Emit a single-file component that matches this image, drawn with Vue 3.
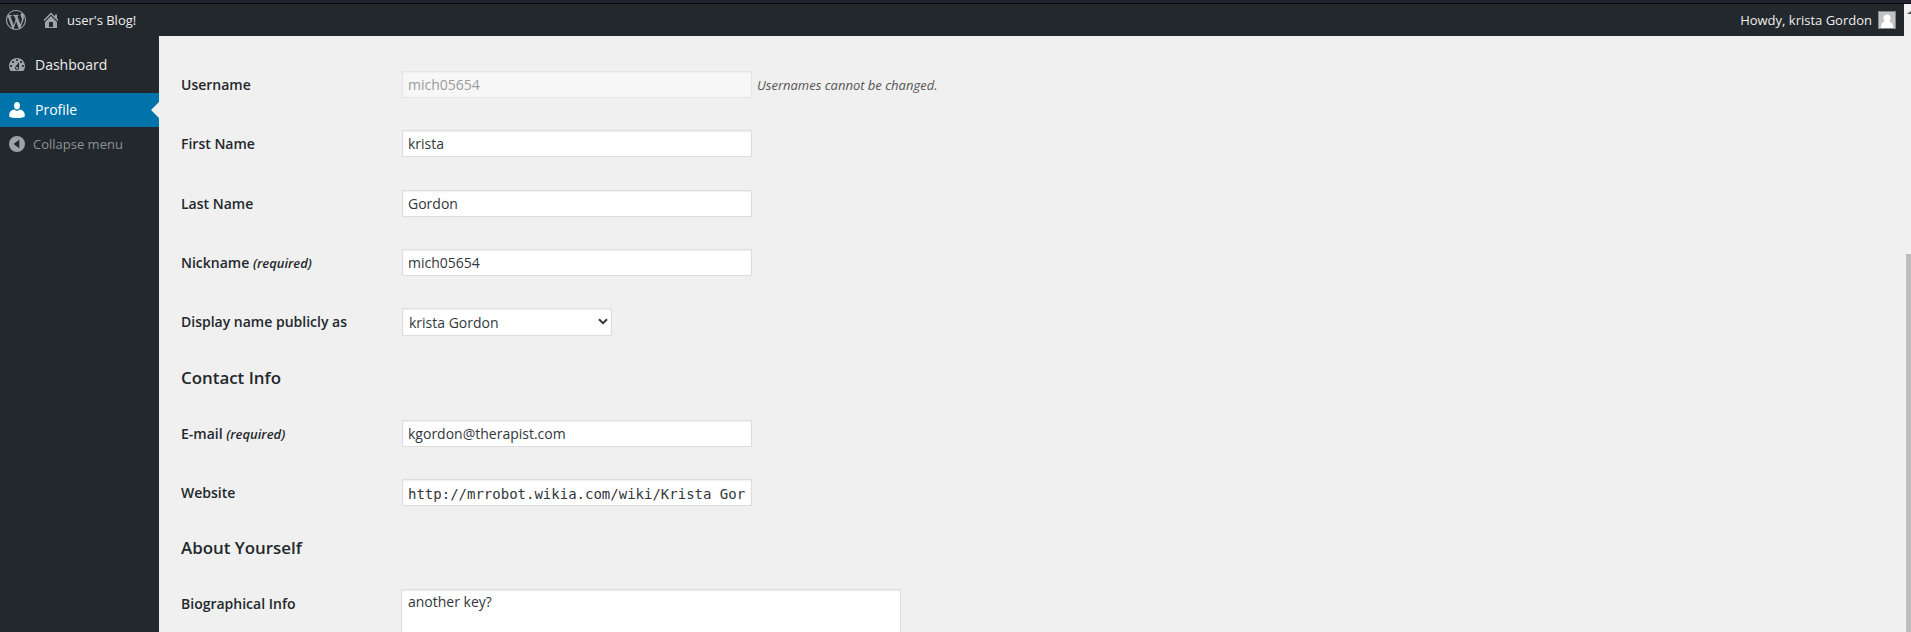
<script setup>
const nameRows = [
  { id: 'user', label: 'Username', value: 'mich05654', disabled: true, hint: 'Usernames cannot be changed.' },
  { id: 'first', label: 'First Name', value: 'krista' },
  { id: 'last', label: 'Last Name', value: 'Gordon' },
  { id: 'nick', label: 'Nickname', required: true, value: 'mich05654' },
]
const contactRows = [
  { id: 'email', label: 'E-mail', required: true, value: 'kgordon@therapist.com' },
  { id: 'url', label: 'Website', value: 'http://mrrobot.wikia.com/wiki/Krista Gordon', code: true },
]
</script>

<template>
  <div class="window">
    <div class="strip"></div>
    <div class="viewport">
      <div class="page">
        <header class="adminbar">
          <svg class="icon" viewBox="0 0 20 20"><path d="M20 10c0-5.51-4.49-10-10-10C4.48 0 0 4.49 0 10c0 5.52 4.48 10 10 10 5.51 0 10-4.48 10-10zM7.78 15.37L4.37 6.22c.55-.02 1.17-.08 1.17-.08.5-.06.44-1.13-.06-1.11 0 0-1.45.11-2.37.11-.18 0-.37 0-.58-.01C4.12 2.69 6.87 1.11 10 1.11c2.33 0 4.45.87 6.05 2.34-.68-.11-1.65.39-1.65 1.58 0 .74.45 1.36.9 2.1.35.61.55 1.36.55 2.46 0 1.49-1.4 5-1.4 5l-3.03-8.37c.54-.02.82-.17.82-.17.5-.05.44-1.25-.06-1.22 0 0-1.44.12-2.38.12-.87 0-2.33-.12-2.33-.12-.5-.03-.56 1.2-.06 1.22l.92.08 1.26 3.41zM17.41 10c.24-.64.74-1.87.43-4.25.7 1.29 1.05 2.71 1.05 4.25 0 3.29-1.73 6.24-4.4 7.78.97-2.59 1.94-5.2 2.92-7.78zM6.1 18.09C3.12 16.65 1.11 13.53 1.11 10c0-1.3.23-2.48.72-3.59C3.25 10.3 4.67 14.2 6.1 18.09zm4.03-6.63l2.58 6.98c-.86.29-1.76.45-2.71.45-.79 0-1.57-.11-2.29-.33.81-2.38 1.62-4.74 2.42-7.1z" /></svg>
          <svg class="icon home" viewBox="0 0 20 20"><path d="M16 8.5l1.53 1.53-1.06 1.06L10 4.6l-6.47 6.49-1.06-1.06L10 2.5l4 4v-2h2v4zm-6-2.46l6 5.99V18H4v-5.97zM12 17v-5H8v5h4z" /></svg>
          <span class="site">user's Blog!</span>
          <span class="howdy">Howdy, krista Gordon</span>
          <svg class="avatar" viewBox="0 0 18 18">
            <rect x=".5" y=".5" width="17" height="17" fill="#c3c3c3" stroke="#82878c" />
            <path d="M9 3.4c2.2 0 3.6 1.5 3.6 3.4 0 1.6-.7 2.8-1.6 3.5 2.6.7 4 2.7 4.2 6.700H2.8c.2-4 1.600-6 4.200-6.700-.9-.7-1.600-1.900-1.600-3.500C5.400 4.900 6.800 3.400 9 3.400z" fill="#fff" />
          </svg>
        </header>
        <div class="body">
          <nav class="menu">
            <a class="item">
              <svg class="icon" viewBox="0 0 20 20"><path d="M3.76 16h12.48c1.1-1.37 1.76-3.11 1.76-5 0-4.42-3.58-8-8-8s-8 3.58-8 8c0 1.89.66 3.63 1.76 5zM10 4c.55 0 1 .45 1 1s-.45 1-1 1-1-.45-1-1 .45-1 1-1zM6 6c.55 0 1 .45 1 1s-.45 1-1 1-1-.45-1-1 .45-1 1-1zm8 0c.55 0 1 .45 1 1s-.45 1-1 1-1-.45-1-1 .45-1 1-1zm-5.37 5.55L12 7v6c0 1.1-.9 2-2 2s-2-.9-2-2c0-.57.24-1.08.63-1.45zM4 10c.55 0 1 .45 1 1s-.45 1-1 1-1-.45-1-1 .45-1 1-1zm12 0c.55 0 1 .45 1 1s-.45 1-1 1-1-.45-1-1 .45-1 1-1zm-5 3c0-.55-.45-1-1-1s-1 .45-1 1 .45 1 1 1 1-.45 1-1z" /></svg>
              <span>Dashboard</span>
            </a>
            <a class="item current">
              <svg class="icon" viewBox="0 0 20 20">
                <ellipse cx="10" cy="5.700" rx="2.900" ry="3.700" />
                <path d="M7.300 9.600c.8.900 1.700 1.300 2.700 1.300s1.900-.4 2.700-1.300c2.900.4 5.100 2.400 5.100 5.200v1.700c-1.700 1-4.500 1.600-7.800 1.600s-6.100-.6-7.800-1.600v-1.700c0-2.800 2.200-4.800 5.100-5.200z" />
              </svg>
              <span>Profile</span>
            </a>
            <a class="item collapse">
              <svg class="icon" viewBox="0 0 20 20"><path fill-rule="evenodd" d="M10 2a8 8 0 1 0 0 16 8 8 0 0 0 0-16zM12.3 5.800v8.400L6.500 10z" /></svg>
              <span>Collapse menu</span>
            </a>
          </nav>
          <main class="content">
            <div v-for="r in nameRows" :key="r.id" class="row">
              <label :for="r.id">{{ r.label }} <em v-if="r.required">(required)</em></label>
              <input :id="r.id" class="field" type="text" :value="r.value" :disabled="r.disabled" />
              <span v-if="r.hint" class="hint">{{ r.hint }}</span>
            </div>
            <div class="row">
              <label>Display name publicly as</label>
              <div class="field select">
                <span>krista Gordon</span>
                <svg viewBox="0 0 10 7"><path d="M1 1.300l4 3.900 4-3.900" fill="none" stroke="#32373c" stroke-width="2" /></svg>
              </div>
            </div>
            <h3>Contact Info</h3>
            <div v-for="r in contactRows" :key="r.id" class="row">
              <label :for="r.id">{{ r.label }} <em v-if="r.required">(required)</em></label>
              <input :id="r.id" class="field" :class="{ code: r.code }" type="text" :value="r.value" />
            </div>
            <h3 class="about">About Yourself</h3>
            <div class="row bio">
              <label for="bio">Biographical Info</label>
              <textarea id="bio" class="field" value="another key?"></textarea>
            </div>
          </main>
        </div>
      </div>
      <div class="scrollbar">
        <svg viewBox="0 0 4 3"><path d="M4 0v3H0z" fill="#505050" /></svg>
        <div class="thumb"></div>
      </div>
    </div>
  </div>
</template>

<style>
body { overflow: hidden; }
</style>

<style scoped>
.window {
  height: 632px;
  display: flex;
  flex-direction: column;
  overflow: hidden;
  background: #f0f0f0;
  font: 13px/18px "Open Sans", sans-serif;
}
.strip { height: 3px; flex: none; background: #22232f; border-bottom: 1px solid #090a0e; }
.viewport { flex: 1; min-height: 0; display: flex; }
.page { flex: 1; min-width: 0; display: flex; flex-direction: column; }
.icon { width: 20px; height: 20px; flex: none; fill: #9ea3a8; }
.adminbar {
  height: 32px;
  flex: none;
  box-sizing: border-box;
  display: flex;
  align-items: center;
  padding: 0 8px 0 6px;
  background: #23282d;
  color: #eee;
}
.home { margin-left: 15px; }
.site { margin-left: 6px; }
.howdy { margin-left: auto; }
.avatar { width: 18px; height: 18px; margin-left: 6px; }
.body { flex: 1; min-height: 0; display: flex; }
.menu { width: 159px; flex: none; padding-top: 12px; box-sizing: border-box; background: #23282d; }
.item {
  position: relative;
  display: flex;
  align-items: center;
  height: 34px;
  padding-left: 7px;
  gap: 8px;
  font-size: 14px;
  color: #eee;
}
.current { margin-top: 11px; background: #0073aa; color: #fff; }
.current .icon { fill: #fff; }
.current::after {
  content: "";
  position: absolute;
  right: 0;
  top: 9px;
  border: 8px solid transparent;
  border-left: 0;
  border-right-color: #f0f0f0;
}
.collapse { gap: 6px; font-size: 13px; color: #8d9196; }
.content { flex: 1; min-width: 0; padding: 19px 0 0 22px; overflow: hidden; color: #23282d; }
.row { display: flex; align-items: center; height: 59.25px; }
label { width: 221px; flex: none; padding-top: 1px; font-size: 14px; font-weight: 600; white-space: nowrap; }
label em { font-size: 13px; }
.field {
  width: 350px;
  height: 27px;
  margin: 0;
  box-sizing: border-box;
  padding: 3px 5px;
  border: 1px solid #ddd;
  border-radius: 0;
  outline: none;
  background: #fff;
  box-shadow: inset 0 1px 2px rgba(0, 0, 0, 0.07);
  color: #32373c;
  font: 14px "Open Sans", sans-serif;
}
.field:disabled {
  border-color: rgba(222, 222, 222, 0.75);
  background: #f7f7f7;
  box-shadow: inset 0 1px 2px rgba(0, 0, 0, 0.04);
  color: #999c9e;
}
.field.code { padding: 4px 5px 2px; font-family: "DejaVu Sans Mono", monospace; }
.hint { margin-left: 5px; padding-top: 1px; font-style: italic; color: #555; }
.select { width: 210px; height: 28px; display: flex; align-items: center; justify-content: space-between; padding: 0 3px 0 6px; }
.select span { padding-top: 1px; }
.select svg { width: 10px; height: 7px; }
h3 { margin: 15px 0 13.6px; font-size: 16.9px; line-height: 24px; font-weight: 600; }
h3.about { margin: 14px 0 22.6px; }
.bio { align-items: flex-start; }
.bio label { padding-top: 12px; }
textarea.field { width: 500px; height: 100px; margin: 6px 0 0 -1px; padding: 2px 6px; line-height: 19.6px; resize: none; }
.scrollbar { width: 7px; flex: none; display: flex; flex-direction: column; align-items: flex-end; }
.scrollbar svg { width: 4px; height: 3px; margin: 7px 0 240px; flex: none; }
.thumb { width: 5px; flex: 1; background: #bdbdbd; }
</style>
